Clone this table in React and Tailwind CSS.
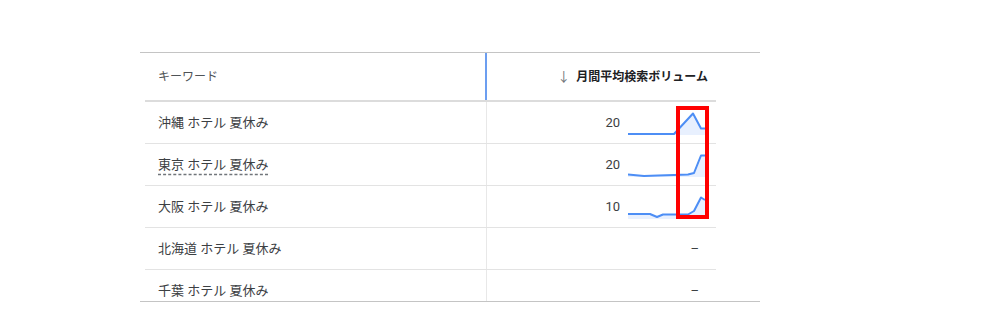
import React from "react";

const rows = [
  {
    kw: "沖縄 ホテル 夏休み",
    vol: "20",
    pts: [[0, 22], [46, 22], [65, 1.5], [73, 16.5], [77, 16.5]],
  },
  {
    kw: "東京 ホテル 夏休み",
    vol: "20",
    dashed: true,
    pts: [[0, 20.5], [16, 22], [30, 21.5], [46, 21], [60, 20.5], [66, 19], [73, 1.5], [77, 1.5]],
  },
  {
    kw: "大阪 ホテル 夏休み",
    vol: "10",
    pts: [[0, 18], [22, 18], [29, 21], [35, 18.5], [60, 18.5], [66, 15], [73, 1.5], [77, 4]],
  },
  { kw: "北海道 ホテル 夏休み" },
  { kw: "千葉 ホテル 夏休み" },
];

const Spark = ({ pts }) => {
  const line = pts.map((p) => p.join(",")).join(" ");
  const area = `0,23 ${line} 77,23`;
  return (
    <svg width="78" height="24" viewBox="0 0 78 24" className="block mt-[3px]">
      <polygon points={area} fill="#e8f0fe" />
      <polyline
        points={line}
        fill="none"
        stroke="#4d8ef5"
        strokeWidth="2"
        strokeLinejoin="round"
      />
    </svg>
  );
};

export default function App() {
  return (
    <div
      className="w-[1008px] h-[336px] bg-white pt-[52px] pl-[140px] text-[#3c4043]"
      style={{ fontFamily: 'Roboto, "Noto Sans CJK JP", sans-serif' }}
    >
      <div className="relative w-[620px] h-[250px] overflow-hidden border-t border-b border-[#c4c4c4]">
        <div className="ml-[5px] w-[571px]">
          {/* header */}
          <div className="flex h-[49px] border-b-2 border-[#dcdcdc]">
            <div className="w-[342px] flex items-center pl-[13px] text-[12px] text-[#4f5357] border-r-2 border-[#6c9ef0]">
              キーワード
            </div>
            <div className="flex-1 flex items-center justify-end pr-[8px] text-[12px] font-semibold text-[#202124]">
              <span className="mr-[6px] text-[#70757a] font-normal text-[13px]">↓</span>
              月間平均検索ボリューム
            </div>
          </div>
          {rows.map((r) => (
            <div key={r.kw} className="flex h-[42px] border-b border-[#e3e3e3]">
              <div className="w-[342px] flex items-center pl-[13px] text-[13px] border-r border-[#e8e8e8]">
                <span
                  className={
                    r.dashed
                      ? "underline decoration-dashed decoration-[#70757a] underline-offset-[5px]"
                      : ""
                  }
                >
                  {r.kw}
                </span>
              </div>
              <div className="flex-1 flex items-center justify-end text-[13px]">
                {r.vol ? (
                  <div className="flex items-center pr-[10px]">
                    <span className="mr-[8px]">{r.vol}</span>
                    <Spark pts={r.pts} />
                  </div>
                ) : (
                  <span className="pr-[17px] text-[#3c4043]">–</span>
                )}
              </div>
            </div>
          ))}
        </div>
        {/* highlight annotation */}
        <div className="absolute left-[536px] top-[53px] w-[33px] h-[113px] border-4 border-[#ff0000]" />
      </div>
    </div>
  );
}
